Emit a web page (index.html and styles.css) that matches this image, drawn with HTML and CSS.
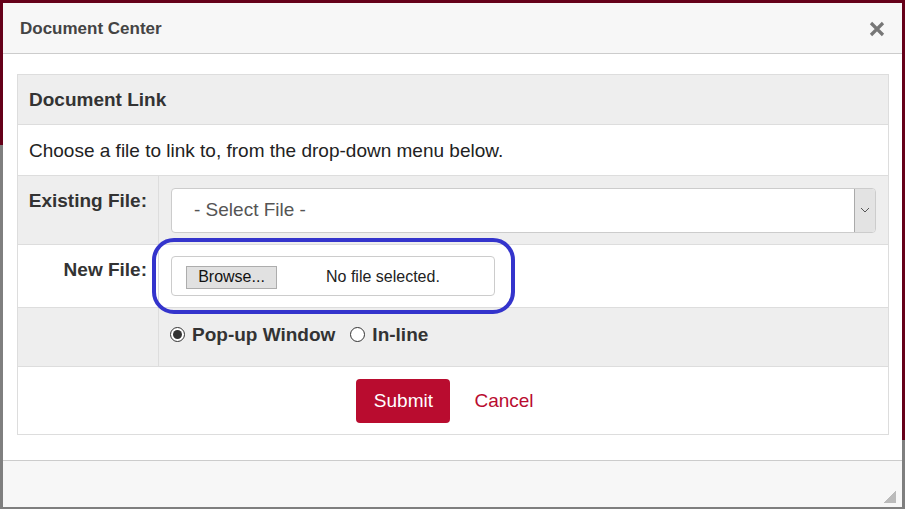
FILE: index.html
```html
<!DOCTYPE html>
<html lang="en">
<head>
  <meta charset="UTF-8">
  <title>Document Center</title>
  <link rel="stylesheet" href="styles.css">
</head>
<body>

  <div class="backdrop">
    <div class="page-main">
      <div class="page-banner"></div>
    </div>
    <div class="page-side"></div>
  </div>

  <div class="dialog">
    <div class="dialog-head">
      <span class="dialog-title">Document Center</span>
      <svg class="close" width="16" height="16" viewBox="0 0 16 16">
        <path d="M2 2 L14 14 M14 2 L2 14" stroke="#777" stroke-width="3.2" fill="none"/>
      </svg>
    </div>

    <div class="dialog-body">
      <table class="doc-table">
        <tr class="row-head">
          <td colspan="2">Document Link</td>
        </tr>
        <tr class="row-intro">
          <td colspan="2">Choose a file to link to, from the drop-down menu below.</td>
        </tr>
        <tr class="row-existing">
          <th>Existing File:</th>
          <td>
            <div class="fake-select">
              <span>- Select File -</span>
              <span class="select-btn">
                <svg width="10" height="6" viewBox="0 0 10 6"><path d="M1 1 L5 5 L9 1" stroke="#555" stroke-width="1" fill="none"/></svg>
              </span>
            </div>
          </td>
        </tr>
        <tr class="row-new">
          <th>New File:</th>
          <td>
            <div class="file-wrap">
              <div class="file-box">
                <span class="browse">Browse...</span>
                <span class="file-name">No file selected.</span>
              </div>
              <div class="highlight"></div>
            </div>
          </td>
        </tr>
        <tr class="row-mode">
          <th></th>
          <td>
            <div class="radios">
              <label class="radio"><span class="dot checked"></span>Pop-up Window</label>
              <label class="radio"><span class="dot"></span>In-line</label>
            </div>
          </td>
        </tr>
        <tr class="row-actions">
          <td colspan="2">
            <div class="actions">
              <button class="submit">Submit</button>
              <a class="cancel" href="#">Cancel</a>
            </div>
          </td>
        </tr>
      </table>
    </div>

    <div class="dialog-foot">
      <span class="grip"></span>
    </div>
  </div>

</body>
</html>
```

FILE: styles.css
```css
* {
  box-sizing: border-box;
}
body {
  margin: 0;
  font-family: "Liberation Sans", Arial, sans-serif;
  background: #7f7f7f;
  height: 509px;
  overflow: hidden;
}
.backdrop {
  display: flex;
  height: 509px;
}
.page-main {
  flex: 1;
}
.page-banner {
  height: 145px;
  background: #650019;
}
.page-side {
  width: 3px;
  height: 440px;
  background: #650019;
}
.dialog {
  position: absolute;
  left: 3px;
  top: 3px;
  width: 899px;
  height: 504px;
  background: #fff;
  display: flex;
  flex-direction: column;
}
.dialog-head {
  height: 51px;
  background: #f7f7f7;
  border-bottom: 1px solid #ccc;
  display: flex;
  align-items: center;
  justify-content: space-between;
  padding: 1px 17px 0 17px;
}
.dialog-title {
  font-size: 17px;
  font-weight: bold;
  color: #444;
}
.close {
  margin-top: 1px;
}
.dialog-body {
  flex: 1;
  padding: 20px 13px 0 14px;
}
.doc-table {
  width: 872px;
  border-collapse: collapse;
  border: 1px solid #ddd;
  font-size: 19px;
  color: #222;
}
.doc-table td, .doc-table th {
  border-top: 1px solid #ddd;
  padding: 0;
}
.row-head td {
  height: 50px;
  background: #eee;
  font-weight: bold;
  color: #333;
  padding: 0 11px;
}
.row-intro td {
  height: 51px;
  padding: 2px 11px 0;
}
.doc-table th {
  width: 141px;
  text-align: right;
  vertical-align: top;
  padding: 14px 11px 0 0;
  border-right: 1px solid #ddd;
  color: #333;
}
.row-existing, .row-mode {
  background: #eee;
}
.row-existing td {
  height: 69px;
  padding: 0 12px;
}
.fake-select {
  height: 45px;
  background: #fff;
  border: 1px solid #ccc;
  border-radius: 4px;
  display: flex;
  align-items: center;
  justify-content: space-between;
  color: #555;
  padding-left: 22px;
}
.select-btn {
  width: 21px;
  height: 43px;
  background: #e3e3e3;
  border-left: 1px solid #aaa;
  border-radius: 0 3px 3px 0;
  display: flex;
  align-items: center;
  justify-content: center;
}
.row-new td {
  height: 63px;
  padding: 0 12px;
}
.file-wrap {
  position: relative;
  width: 324px;
}
.file-box {
  height: 40px;
  border: 1px solid #ccc;
  border-radius: 4px;
  background: #fff;
  display: flex;
  align-items: center;
  padding: 2px 0 0 14px;
  font-size: 16px;
  color: #222;
}
.browse {
  width: 91px;
  height: 23px;
  background: #e1e1e1;
  border: 1px solid #adadad;
  display: flex;
  align-items: center;
  justify-content: center;
  color: #111;
}
.file-name {
  margin-left: 49px;
}
.highlight {
  position: absolute;
  left: -19px;
  top: -18px;
  width: 363px;
  height: 76px;
  border: 4px solid #3434cc;
  border-radius: 22px;
}
.row-mode th {
  height: 59px;
}
.row-mode td {
  padding: 0 11px 5px;
  font-weight: bold;
  color: #333;
}
.radios {
  display: flex;
  align-items: center;
  gap: 15px;
}
.radio {
  display: flex;
  align-items: center;
}
.dot {
  width: 15px;
  height: 15px;
  border: 1px solid #333;
  border-radius: 50%;
  background: #fff;
  margin-right: 7px;
  display: flex;
  align-items: center;
  justify-content: center;
}
.dot.checked::after {
  content: "";
  width: 9px;
  height: 9px;
  border-radius: 50%;
  background: #333;
}
.row-actions td {
  height: 68px;
}
.actions {
  display: flex;
  justify-content: center;
  align-items: center;
  gap: 24px;
  padding-right: 16px;
}
.submit {
  width: 94px;
  height: 44px;
  background: #b90c2f;
  color: #fff;
  border: none;
  border-radius: 4px;
  font-family: inherit;
  font-size: 19px;
}
.cancel {
  color: #b90c2f;
  text-decoration: none;
  font-size: 19px;
}
.dialog-foot {
  height: 47px;
  background: #f7f7f7;
  border-top: 1px solid #ccc;
  display: flex;
  justify-content: flex-end;
  align-items: flex-end;
  padding: 0 6px 4px 0;
}
.grip {
  width: 13px;
  height: 13px;
  background: linear-gradient(135deg, transparent 50%, #bbb 50%);
}
```
